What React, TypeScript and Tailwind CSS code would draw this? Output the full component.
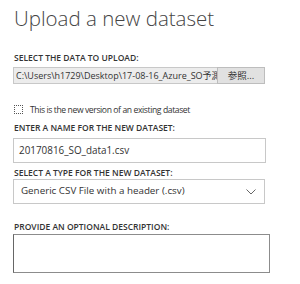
export default function App() {
  return (
    <div
      className="w-[300px] h-[284px] bg-white overflow-hidden pl-[13px] pt-[6px] text-[#333]"
      style={{ fontFamily: '"Open Sans", "Noto Sans CJK JP", sans-serif' }}
    >
      {/* タイトル */}
      <h1 className="text-[20.5px] leading-[24px] font-light text-[#444] pl-[1px]">Upload a new dataset</h1>

      {/* ファイル選択 */}
      <div className="mt-[22px] text-[8.5px] leading-[12px] font-semibold uppercase pl-[1px]">
        Select the data to upload:
      </div>
      <div className="mt-[3px] flex w-[252px] h-[17px]">
        <div className="flex-1 min-w-0 bg-[#ececec] border border-[#c8c8c8] border-r-0 overflow-hidden whitespace-nowrap text-[9px] leading-[15px] pl-[2px]">
          C:\Users\h1729\Desktop\17-08-16_Azure_SO予測
        </div>
        <div className="w-[48px] bg-[#e1e1e1] border border-[#bdbdbd] flex items-center justify-center text-[9.5px] leading-[15px]">
          参照...
        </div>
      </div>

      {/* チェックボックス */}
      <label className="mt-[21px] flex items-center gap-[7px] h-[9px] pl-[1px]">
        <span className="w-[9px] h-[9px] border border-dotted border-[#555] bg-white" />
        <span className="text-[8.6px] leading-[12px] tracking-[-0.4px]">This is the new version of an existing dataset</span>
      </label>

      {/* 名前 */}
      <div className="mt-[8px] text-[8.5px] leading-[12px] font-semibold uppercase pl-[1px]">
        Enter a name for the new dataset:
      </div>
      <div className="mt-[4px] w-[253px] h-[25px] border border-[#c8c8c8] flex items-center pl-[5px] text-[9.9px]">
        20170816_SO_data1.csv
      </div>

      {/* 種類 */}
      <div className="mt-[4px] text-[8.5px] leading-[12px] font-semibold uppercase pl-[1px]">
        Select a type for the new dataset:
      </div>
      <div className="mt-[0px] w-[252px] h-[25px] border border-[#c8c8c8] flex items-center justify-between pl-[7px] pr-[8px] text-[9.8px]">
        <span>Generic CSV File with a header (.csv)</span>
        <svg width="10" height="6" viewBox="0 0 10 6" fill="none" stroke="#666" strokeWidth="1">
          <path d="M0.5 0.5 L5 5 L9.5 0.5" />
        </svg>
      </div>

      {/* 説明 */}
      <div className="mt-[17px] text-[8.5px] leading-[12px] font-semibold uppercase pl-[1px]">
        Provide an optional description:
      </div>
      <div className="mt-[1px] w-[257px] h-[39px] border border-[#8c8c8c] border-l-[#666] bg-white" />
    </div>
  );
}
